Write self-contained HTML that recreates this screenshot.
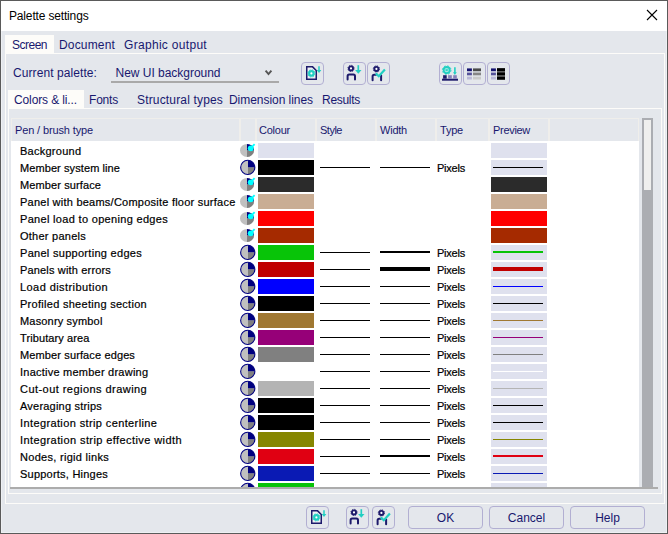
<!DOCTYPE html>
<html><head><meta charset="utf-8"><title>Palette settings</title>
<style>
html,body{margin:0;padding:0}
body{width:668px;height:534px;overflow:hidden;background:#e4e7ec;position:relative;font-family:"Liberation Sans",sans-serif;font-size:12px;color:#000}
div,span,i{position:absolute;box-sizing:border-box}
.win{left:0;top:0;width:668px;height:534px;border:1px solid #5a5a5a;box-shadow:inset 0 0 0 1px #eef0f3}
.title{left:1px;top:1px;width:666px;height:30px;background:#fff}
.t{white-space:nowrap;line-height:16px;height:16px;color:#18186f}
.tab{background:#fdfcf9}
.hl{background:#fff}
.hdr{top:118px;height:23px;background:#e4e7ec;border-top:1px solid #efeeeb;border-left:1px solid #efeeeb;border-right:1px solid #efeeeb}
.list{left:11px;top:142px;width:628px;height:345px;background:#fff;overflow:hidden}
.rt{-webkit-text-stroke:0.2px #000;left:20px;white-space:nowrap;line-height:16px;height:16px;font-family:"Liberation Sans",sans-serif;font-size:11px;color:#000}
.px{-webkit-text-stroke:0.2px #000;left:437px;white-space:nowrap;line-height:16px;height:16px;font-family:"Liberation Sans",sans-serif;font-size:11px;color:#000}
.ic{position:absolute}
.sw{left:258px;width:56px;height:15px}
.ln{width:50px;background:#000}
.pv{left:491px;width:56px;height:15px;background:#dfe1ee}
.pv i{left:2px;width:50px}
.btn{border:1px solid #b2afd2;border-radius:4px;background:#e4e7ec}
.tb{text-align:center;line-height:23px;color:#18186f;font-size:12px}
</style></head><body>
<div class="win"></div>
<div class="title"></div>
<svg style="position:absolute;left:646px;top:9px" width="12" height="12" viewBox="0 0 12 12"><path d="M1 1L11 11M11 1L1 11" stroke="#000" stroke-width="1.1" fill="none"/></svg>

<!-- outer tabs -->
<div class="tab" style="left:5px;top:35px;width:49px;height:19px"></div>
<!-- outer panel border -->
<div style="left:5px;top:53px;width:660px;height:451px;border:1px solid #fdfcf9"></div>

<div style="left:111px;top:81px;width:168px;height:2px;background:#a9a9a9"></div>
<svg style="position:absolute;left:263px;top:69px" width="10" height="8" viewBox="0 0 10 8"><path d="M2.6 1.6L5.5 5.1L8.4 1.6" stroke="#555" stroke-width="1.9" fill="none"/></svg>

<!-- toolbar buttons -->
<svg style="position:absolute;left:301px;top:62px" width="23" height="23" viewBox="0 0 23 23"><rect x=".5" y=".5" width="22" height="22" rx="3.5" fill="none" stroke="#b2afd2"/><path d="M5.75 4.85H11.6L15.25 8.5V17.15H5.75Z" fill="#eef0f4" stroke="#1d1a6b" stroke-width="1.5" stroke-linejoin="miter"/><circle cx="10.4" cy="11.4" r="3.6" fill="none" stroke="#21cfc2" stroke-width="0.9" stroke-dasharray="1.5 1.33"/><circle cx="10.4" cy="11.4" r="2.2" fill="#fff" stroke="#21cfc2" stroke-width="2.2"/><path d="M18 4.3V9" stroke="#21cfc2" stroke-width="1.5" fill="none"/><path d="M15.7 8.1H20.3L18 10.9Z" fill="#21cfc2"/></svg>
<svg style="position:absolute;left:343px;top:62px" width="23" height="23" viewBox="0 0 23 23"><rect x=".5" y=".5" width="22" height="22" rx="3.5" fill="none" stroke="#b2afd2"/><circle cx="8" cy="6.4" r="3.1" fill="none" stroke="#1d1a6b" stroke-width="0.9" stroke-dasharray="1.3 1.13"/><circle cx="8" cy="6.4" r="2.05" fill="#fff" stroke="#1d1a6b" stroke-width="1.9"/><path d="M4.6 17.6V14.2Q4.6 12.6 6.2 12.6H10.4Q12 12.6 12 14.2V17.6" fill="none" stroke="#1d1a6b" stroke-width="2" stroke-linecap="round"/><path d="M15.3 3.2V8.5" stroke="#21cfc2" stroke-width="1.7" fill="none"/><path d="M12.1 7.9H18.5L15.3 11.7Z" fill="#21cfc2"/></svg>
<svg style="position:absolute;left:367px;top:62px" width="23" height="23" viewBox="0 0 23 23"><rect x=".5" y=".5" width="22" height="22" rx="3.5" fill="none" stroke="#b2afd2"/><circle cx="9.4" cy="6.9" r="3.1" fill="none" stroke="#1d1a6b" stroke-width="0.9" stroke-dasharray="1.3 1.13"/><circle cx="9.4" cy="6.9" r="2.05" fill="#fff" stroke="#1d1a6b" stroke-width="1.9"/><path d="M5.6 18.2V14.4Q5.6 12.8 7.2 12.8H9" fill="none" stroke="#1d1a6b" stroke-width="2" stroke-linecap="round"/><path d="M14.1 13.4V18.2" fill="none" stroke="#1d1a6b" stroke-width="2" stroke-linecap="round"/><path d="M8.8 11.4L11.8 14.2L17.9 7.5" fill="none" stroke="#21cfc2" stroke-width="2.2"/></svg>
<svg style="position:absolute;left:439px;top:62px" width="23" height="23" viewBox="0 0 23 23"><rect x=".5" y=".5" width="22" height="22" rx="3.5" fill="none" stroke="#b2afd2"/><circle cx="7.7" cy="8.1" r="4.3" fill="none" stroke="#21cfc2" stroke-width="0.9" stroke-dasharray="1.7 1.68"/><circle cx="7.7" cy="8.1" r="3.1" fill="#9fe9e2" stroke="#21cfc2" stroke-width="1.8"/><ellipse cx="7.7" cy="8.1" rx="1.5" ry="0.8" fill="#21cfc2"/><path d="M15.9 5.2V11" stroke="#21cfc2" stroke-width="1.6" fill="none"/><path d="M14 10.2H17.8L15.9 12.9Z" fill="#21cfc2"/><rect x="3" y="16.7" width="16" height="2" fill="#1d1a6b"/><rect x="4.1" y="13.2" width="3.6" height="3.5" fill="#1d1a6b"/><rect x="9.1" y="13.2" width="3.7" height="3.5" fill="#8481b8"/><rect x="14.2" y="13.2" width="3.6" height="3.5" fill="#8481b8"/></svg>
<svg style="position:absolute;left:463px;top:62px" width="23" height="23" viewBox="0 0 23 23"><rect x=".5" y=".5" width="22" height="22" rx="3.5" fill="none" stroke="#b2afd2"/><rect x="4" y="6.4" width="4.9" height="2.9" fill="#15136f"/><rect x="4" y="10.5" width="4.9" height="2.8" fill="#55529a"/><rect x="4" y="14.7" width="4.9" height="2.8" fill="#bab8d8"/><rect x="10" y="6.4" width="8" height="2.9" fill="#4a4a4a"/><rect x="10" y="10.5" width="8" height="2.8" fill="#858585"/><rect x="10" y="14.7" width="8" height="2.8" fill="#cacaca"/><rect x="10" y="9.3" width="8" height="1.2" fill="#c4c6ca"/><rect x="4" y="9.3" width="4.9" height="1.2" fill="#c0c0dc"/></svg>
<svg style="position:absolute;left:487px;top:62px" width="23" height="23" viewBox="0 0 23 23"><rect x=".5" y=".5" width="22" height="22" rx="3.5" fill="none" stroke="#b2afd2"/><rect x="4" y="6.4" width="4.9" height="2.9" fill="#15136f"/><rect x="4" y="10.5" width="4.9" height="2.8" fill="#55529a"/><rect x="4" y="14.7" width="4.9" height="2.8" fill="#bab8d8"/><rect x="10" y="6.2" width="8" height="11.5" fill="#8a8a8a"/><rect x="10" y="6.2" width="8" height="3.1" fill="#000"/><rect x="10" y="10.4" width="8" height="3" fill="#000"/><rect x="10" y="14.6" width="8" height="3.1" fill="#000"/><rect x="4" y="9.3" width="4.9" height="1.2" fill="#c0c0dc"/></svg>

<!-- inner tabs -->
<div class="tab" style="left:8px;top:90px;width:76px;height:19px"></div>
<div style="left:8px;top:108px;width:654px;height:386px;border:1px solid #fdfcf9"></div>

<!-- list -->
<div style="left:10px;top:487px;width:648px;height:2px;background:#acacac"></div>
<div style="left:11px;top:118px;width:628px;height:369px;background:#fff"></div>
<div class="hdr" style="left:11px;width:229px"></div>
<div class="hdr" style="left:240px;width:16px"></div>
<div class="hdr" style="left:256px;width:60px"></div>
<div class="hdr" style="left:316px;width:60px"></div>
<div class="hdr" style="left:376px;width:60px"></div>
<div class="hdr" style="left:436px;width:53px"></div>
<div class="hdr" style="left:489px;width:60px"></div>
<div class="hdr" style="left:549px;width:90px"></div>

<div style="left:0;top:0;width:640px;height:487px;overflow:hidden">
<div class="rt" style="top:143px;letter-spacing:0.258px">Background</div>
<svg class="ic" style="left:239px;top:142px" width="17" height="17" viewBox="0 0 17 17"><ellipse cx="8" cy="8.4" rx="7" ry="6.5" fill="#c0c0c0"/><path d="M8 8.4V1.9A7 6.5 0 0 1 15 8.4Z" fill="#000080"/><path d="M8 8.4H15A7 6.5 0 0 1 8 14.9Z" fill="#808080"/><circle cx="11.7" cy="6.3" r="2.9" fill="#00ffff"/><path d="M12.8 5.2L15.6 2.2" stroke="#00ffff" stroke-width="1.8" fill="none"/></svg>
<div class="sw" style="top:143px;background:#dfe1ee"></div>
<div class="pv" style="top:143px;background:#dfe1ee"></div>
<div class="rt" style="top:160px;letter-spacing:0.088px">Member system line</div>
<svg class="ic" style="left:239px;top:159px" width="17" height="17" viewBox="0 0 17 17"><circle cx="8.75" cy="8.4" r="7" fill="#c0c0c0"/><path d="M9 8.4V1.4A7 7 0 0 1 15.75 8.4Z" fill="#000080"/><path d="M9 8.4H15.75A7 7 0 0 1 9 15.4Z" fill="#808080"/><circle cx="8.75" cy="8.4" r="7.1" fill="none" stroke="#000080" stroke-width="1.1"/></svg>
<div class="sw" style="top:160px;background:#000000"></div>
<div class="ln" style="left:320px;top:167px;height:1px"></div>
<div class="ln" style="left:380px;top:167px;height:1px"></div>
<div class="px" style="top:160px;letter-spacing:-0.224px">Pixels</div>
<div class="pv" style="top:160px"><i style="top:7px;height:1px;background:#000000"></i></div>
<div class="rt" style="top:177px;letter-spacing:0.108px">Member surface</div>
<svg class="ic" style="left:239px;top:176px" width="17" height="17" viewBox="0 0 17 17"><ellipse cx="8" cy="8.4" rx="7" ry="6.5" fill="#c0c0c0"/><path d="M8 8.4V1.9A7 6.5 0 0 1 15 8.4Z" fill="#000080"/><path d="M8 8.4H15A7 6.5 0 0 1 8 14.9Z" fill="#808080"/><circle cx="11.7" cy="6.3" r="2.9" fill="#00ffff"/><path d="M12.8 5.2L15.6 2.2" stroke="#00ffff" stroke-width="1.8" fill="none"/></svg>
<div class="sw" style="top:177px;background:#2b2b2b"></div>
<div class="pv" style="top:177px;background:#2b2b2b"></div>
<div class="rt" style="top:194px;letter-spacing:0.236px">Panel with beams/Composite floor surface</div>
<svg class="ic" style="left:239px;top:193px" width="17" height="17" viewBox="0 0 17 17"><ellipse cx="8" cy="8.4" rx="7" ry="6.5" fill="#c0c0c0"/><path d="M8 8.4V1.9A7 6.5 0 0 1 15 8.4Z" fill="#000080"/><path d="M8 8.4H15A7 6.5 0 0 1 8 14.9Z" fill="#808080"/><circle cx="11.7" cy="6.3" r="2.9" fill="#00ffff"/><path d="M12.8 5.2L15.6 2.2" stroke="#00ffff" stroke-width="1.8" fill="none"/></svg>
<div class="sw" style="top:194px;background:#c9ad94"></div>
<div class="pv" style="top:194px;background:#c9ad94"></div>
<div class="rt" style="top:211px;letter-spacing:0.317px">Panel load to opening edges</div>
<svg class="ic" style="left:239px;top:210px" width="17" height="17" viewBox="0 0 17 17"><ellipse cx="8" cy="8.4" rx="7" ry="6.5" fill="#c0c0c0"/><path d="M8 8.4V1.9A7 6.5 0 0 1 15 8.4Z" fill="#000080"/><path d="M8 8.4H15A7 6.5 0 0 1 8 14.9Z" fill="#808080"/><circle cx="11.7" cy="6.3" r="2.9" fill="#00ffff"/><path d="M12.8 5.2L15.6 2.2" stroke="#00ffff" stroke-width="1.8" fill="none"/></svg>
<div class="sw" style="top:211px;background:#ff0000"></div>
<div class="pv" style="top:211px;background:#ff0000"></div>
<div class="rt" style="top:228px;letter-spacing:0.251px">Other panels</div>
<svg class="ic" style="left:239px;top:227px" width="17" height="17" viewBox="0 0 17 17"><ellipse cx="8" cy="8.4" rx="7" ry="6.5" fill="#c0c0c0"/><path d="M8 8.4V1.9A7 6.5 0 0 1 15 8.4Z" fill="#000080"/><path d="M8 8.4H15A7 6.5 0 0 1 8 14.9Z" fill="#808080"/><circle cx="11.7" cy="6.3" r="2.9" fill="#00ffff"/><path d="M12.8 5.2L15.6 2.2" stroke="#00ffff" stroke-width="1.8" fill="none"/></svg>
<div class="sw" style="top:228px;background:#a52a00"></div>
<div class="pv" style="top:228px;background:#a52a00"></div>
<div class="rt" style="top:245px;letter-spacing:0.291px">Panel supporting edges</div>
<svg class="ic" style="left:239px;top:244px" width="17" height="17" viewBox="0 0 17 17"><circle cx="8.75" cy="8.4" r="7" fill="#c0c0c0"/><path d="M9 8.4V1.4A7 7 0 0 1 15.75 8.4Z" fill="#000080"/><path d="M9 8.4H15.75A7 7 0 0 1 9 15.4Z" fill="#808080"/><circle cx="8.75" cy="8.4" r="7.1" fill="none" stroke="#000080" stroke-width="1.1"/></svg>
<div class="sw" style="top:245px;background:#08c408"></div>
<div class="ln" style="left:320px;top:252px;height:1px"></div>
<div class="ln" style="left:380px;top:251px;height:2px"></div>
<div class="px" style="top:245px;letter-spacing:-0.224px">Pixels</div>
<div class="pv" style="top:245px"><i style="top:6px;height:2px;background:#08c408"></i></div>
<div class="rt" style="top:262px;letter-spacing:0.164px">Panels with errors</div>
<svg class="ic" style="left:239px;top:261px" width="17" height="17" viewBox="0 0 17 17"><circle cx="8.75" cy="8.4" r="7" fill="#c0c0c0"/><path d="M9 8.4V1.4A7 7 0 0 1 15.75 8.4Z" fill="#000080"/><path d="M9 8.4H15.75A7 7 0 0 1 9 15.4Z" fill="#808080"/><circle cx="8.75" cy="8.4" r="7.1" fill="none" stroke="#000080" stroke-width="1.1"/></svg>
<div class="sw" style="top:262px;background:#c00000"></div>
<div class="ln" style="left:320px;top:269px;height:1px"></div>
<div class="ln" style="left:380px;top:267px;height:4px"></div>
<div class="px" style="top:262px;letter-spacing:-0.224px">Pixels</div>
<div class="pv" style="top:262px"><i style="top:5px;height:4px;background:#c00000"></i></div>
<div class="rt" style="top:279px;letter-spacing:0.427px">Load distribution</div>
<svg class="ic" style="left:239px;top:278px" width="17" height="17" viewBox="0 0 17 17"><circle cx="8.75" cy="8.4" r="7" fill="#c0c0c0"/><path d="M9 8.4V1.4A7 7 0 0 1 15.75 8.4Z" fill="#000080"/><path d="M9 8.4H15.75A7 7 0 0 1 9 15.4Z" fill="#808080"/><circle cx="8.75" cy="8.4" r="7.1" fill="none" stroke="#000080" stroke-width="1.1"/></svg>
<div class="sw" style="top:279px;background:#0000ff"></div>
<div class="ln" style="left:320px;top:286px;height:1px"></div>
<div class="ln" style="left:380px;top:286px;height:1px"></div>
<div class="px" style="top:279px;letter-spacing:-0.224px">Pixels</div>
<div class="pv" style="top:279px"><i style="top:7px;height:1px;background:#0000ff"></i></div>
<div class="rt" style="top:296px;letter-spacing:0.286px">Profiled sheeting section</div>
<svg class="ic" style="left:239px;top:295px" width="17" height="17" viewBox="0 0 17 17"><circle cx="8.75" cy="8.4" r="7" fill="#c0c0c0"/><path d="M9 8.4V1.4A7 7 0 0 1 15.75 8.4Z" fill="#000080"/><path d="M9 8.4H15.75A7 7 0 0 1 9 15.4Z" fill="#808080"/><circle cx="8.75" cy="8.4" r="7.1" fill="none" stroke="#000080" stroke-width="1.1"/></svg>
<div class="sw" style="top:296px;background:#000000"></div>
<div class="ln" style="left:320px;top:303px;height:1px"></div>
<div class="ln" style="left:380px;top:303px;height:1px"></div>
<div class="px" style="top:296px;letter-spacing:-0.224px">Pixels</div>
<div class="pv" style="top:296px"><i style="top:7px;height:1px;background:#000000"></i></div>
<div class="rt" style="top:313px;letter-spacing:0.173px">Masonry symbol</div>
<svg class="ic" style="left:239px;top:312px" width="17" height="17" viewBox="0 0 17 17"><circle cx="8.75" cy="8.4" r="7" fill="#c0c0c0"/><path d="M9 8.4V1.4A7 7 0 0 1 15.75 8.4Z" fill="#000080"/><path d="M9 8.4H15.75A7 7 0 0 1 9 15.4Z" fill="#808080"/><circle cx="8.75" cy="8.4" r="7.1" fill="none" stroke="#000080" stroke-width="1.1"/></svg>
<div class="sw" style="top:313px;background:#a07832"></div>
<div class="ln" style="left:320px;top:320px;height:1px"></div>
<div class="ln" style="left:380px;top:320px;height:1px"></div>
<div class="px" style="top:313px;letter-spacing:-0.224px">Pixels</div>
<div class="pv" style="top:313px"><i style="top:7px;height:1px;background:#a07832"></i></div>
<div class="rt" style="top:330px;letter-spacing:0.103px">Tributary area</div>
<svg class="ic" style="left:239px;top:329px" width="17" height="17" viewBox="0 0 17 17"><circle cx="8.75" cy="8.4" r="7" fill="#c0c0c0"/><path d="M9 8.4V1.4A7 7 0 0 1 15.75 8.4Z" fill="#000080"/><path d="M9 8.4H15.75A7 7 0 0 1 9 15.4Z" fill="#808080"/><circle cx="8.75" cy="8.4" r="7.1" fill="none" stroke="#000080" stroke-width="1.1"/></svg>
<div class="sw" style="top:330px;background:#960078"></div>
<div class="ln" style="left:320px;top:337px;height:1px"></div>
<div class="ln" style="left:380px;top:337px;height:1px"></div>
<div class="px" style="top:330px;letter-spacing:-0.224px">Pixels</div>
<div class="pv" style="top:330px"><i style="top:7px;height:1px;background:#960078"></i></div>
<div class="rt" style="top:347px;letter-spacing:0.125px">Member surface edges</div>
<svg class="ic" style="left:239px;top:346px" width="17" height="17" viewBox="0 0 17 17"><circle cx="8.75" cy="8.4" r="7" fill="#c0c0c0"/><path d="M9 8.4V1.4A7 7 0 0 1 15.75 8.4Z" fill="#000080"/><path d="M9 8.4H15.75A7 7 0 0 1 9 15.4Z" fill="#808080"/><circle cx="8.75" cy="8.4" r="7.1" fill="none" stroke="#000080" stroke-width="1.1"/></svg>
<div class="sw" style="top:347px;background:#808080"></div>
<div class="ln" style="left:320px;top:354px;height:1px"></div>
<div class="ln" style="left:380px;top:354px;height:1px"></div>
<div class="px" style="top:347px;letter-spacing:-0.224px">Pixels</div>
<div class="pv" style="top:347px"><i style="top:7px;height:1px;background:#808080"></i></div>
<div class="rt" style="top:364px;letter-spacing:0.235px">Inactive member drawing</div>
<svg class="ic" style="left:239px;top:363px" width="17" height="17" viewBox="0 0 17 17"><circle cx="8.75" cy="8.4" r="7" fill="#c0c0c0"/><path d="M9 8.4V1.4A7 7 0 0 1 15.75 8.4Z" fill="#000080"/><path d="M9 8.4H15.75A7 7 0 0 1 9 15.4Z" fill="#808080"/><circle cx="8.75" cy="8.4" r="7.1" fill="none" stroke="#000080" stroke-width="1.1"/></svg>
<div class="ln" style="left:320px;top:371px;height:1px"></div>
<div class="ln" style="left:380px;top:371px;height:1px"></div>
<div class="px" style="top:364px;letter-spacing:-0.224px">Pixels</div>
<div class="pv" style="top:364px"><i style="top:7px;height:1px;background:#ffffff"></i></div>
<div class="rt" style="top:381px;letter-spacing:0.452px">Cut-out regions drawing</div>
<svg class="ic" style="left:239px;top:380px" width="17" height="17" viewBox="0 0 17 17"><circle cx="8.75" cy="8.4" r="7" fill="#c0c0c0"/><path d="M9 8.4V1.4A7 7 0 0 1 15.75 8.4Z" fill="#000080"/><path d="M9 8.4H15.75A7 7 0 0 1 9 15.4Z" fill="#808080"/><circle cx="8.75" cy="8.4" r="7.1" fill="none" stroke="#000080" stroke-width="1.1"/></svg>
<div class="sw" style="top:381px;background:#b4b4b4"></div>
<div class="ln" style="left:320px;top:388px;height:1px"></div>
<div class="ln" style="left:380px;top:388px;height:1px"></div>
<div class="px" style="top:381px;letter-spacing:-0.224px">Pixels</div>
<div class="pv" style="top:381px"><i style="top:7px;height:1px;background:#b4b4b4"></i></div>
<div class="rt" style="top:398px;letter-spacing:0.208px">Averaging strips</div>
<svg class="ic" style="left:239px;top:397px" width="17" height="17" viewBox="0 0 17 17"><circle cx="8.75" cy="8.4" r="7" fill="#c0c0c0"/><path d="M9 8.4V1.4A7 7 0 0 1 15.75 8.4Z" fill="#000080"/><path d="M9 8.4H15.75A7 7 0 0 1 9 15.4Z" fill="#808080"/><circle cx="8.75" cy="8.4" r="7.1" fill="none" stroke="#000080" stroke-width="1.1"/></svg>
<div class="sw" style="top:398px;background:#000000"></div>
<div class="ln" style="left:320px;top:405px;height:1px"></div>
<div class="ln" style="left:380px;top:405px;height:1px"></div>
<div class="px" style="top:398px;letter-spacing:-0.224px">Pixels</div>
<div class="pv" style="top:398px"><i style="top:7px;height:1px;background:#000000"></i></div>
<div class="rt" style="top:415px;letter-spacing:0.383px">Integration strip centerline</div>
<svg class="ic" style="left:239px;top:414px" width="17" height="17" viewBox="0 0 17 17"><circle cx="8.75" cy="8.4" r="7" fill="#c0c0c0"/><path d="M9 8.4V1.4A7 7 0 0 1 15.75 8.4Z" fill="#000080"/><path d="M9 8.4H15.75A7 7 0 0 1 9 15.4Z" fill="#808080"/><circle cx="8.75" cy="8.4" r="7.1" fill="none" stroke="#000080" stroke-width="1.1"/></svg>
<div class="sw" style="top:415px;background:#000000"></div>
<div class="ln" style="left:320px;top:422px;height:1px"></div>
<div class="ln" style="left:380px;top:422px;height:1px"></div>
<div class="px" style="top:415px;letter-spacing:-0.224px">Pixels</div>
<div class="pv" style="top:415px"><i style="top:7px;height:1px;background:#000000"></i></div>
<div class="rt" style="top:432px;letter-spacing:0.412px">Integration strip effective width</div>
<svg class="ic" style="left:239px;top:431px" width="17" height="17" viewBox="0 0 17 17"><circle cx="8.75" cy="8.4" r="7" fill="#c0c0c0"/><path d="M9 8.4V1.4A7 7 0 0 1 15.75 8.4Z" fill="#000080"/><path d="M9 8.4H15.75A7 7 0 0 1 9 15.4Z" fill="#808080"/><circle cx="8.75" cy="8.4" r="7.1" fill="none" stroke="#000080" stroke-width="1.1"/></svg>
<div class="sw" style="top:432px;background:#868600"></div>
<div class="ln" style="left:320px;top:439px;height:1px"></div>
<div class="ln" style="left:380px;top:439px;height:1px"></div>
<div class="px" style="top:432px;letter-spacing:-0.224px">Pixels</div>
<div class="pv" style="top:432px"><i style="top:7px;height:1px;background:#868600"></i></div>
<div class="rt" style="top:449px;letter-spacing:0.291px">Nodes, rigid links</div>
<svg class="ic" style="left:239px;top:448px" width="17" height="17" viewBox="0 0 17 17"><circle cx="8.75" cy="8.4" r="7" fill="#c0c0c0"/><path d="M9 8.4V1.4A7 7 0 0 1 15.75 8.4Z" fill="#000080"/><path d="M9 8.4H15.75A7 7 0 0 1 9 15.4Z" fill="#808080"/><circle cx="8.75" cy="8.4" r="7.1" fill="none" stroke="#000080" stroke-width="1.1"/></svg>
<div class="sw" style="top:449px;background:#e00012"></div>
<div class="ln" style="left:320px;top:456px;height:1px"></div>
<div class="ln" style="left:380px;top:455px;height:2px"></div>
<div class="px" style="top:449px;letter-spacing:-0.224px">Pixels</div>
<div class="pv" style="top:449px"><i style="top:6px;height:2px;background:#e00012"></i></div>
<div class="rt" style="top:466px;letter-spacing:0.226px">Supports, Hinges</div>
<svg class="ic" style="left:239px;top:465px" width="17" height="17" viewBox="0 0 17 17"><circle cx="8.75" cy="8.4" r="7" fill="#c0c0c0"/><path d="M9 8.4V1.4A7 7 0 0 1 15.75 8.4Z" fill="#000080"/><path d="M9 8.4H15.75A7 7 0 0 1 9 15.4Z" fill="#808080"/><circle cx="8.75" cy="8.4" r="7.1" fill="none" stroke="#000080" stroke-width="1.1"/></svg>
<div class="sw" style="top:466px;background:#0a1ab4"></div>
<div class="ln" style="left:320px;top:473px;height:1px"></div>
<div class="ln" style="left:380px;top:473px;height:1px"></div>
<div class="px" style="top:466px;letter-spacing:-0.224px">Pixels</div>
<div class="pv" style="top:466px"><i style="top:7px;height:1px;background:#0a1ab4"></i></div>
<svg class="ic" style="left:239px;top:482px" width="17" height="17" viewBox="0 0 17 17"><circle cx="8.75" cy="8.4" r="7" fill="#c0c0c0"/><path d="M9 8.4V1.4A7 7 0 0 1 15.75 8.4Z" fill="#000080"/><path d="M9 8.4H15.75A7 7 0 0 1 9 15.4Z" fill="#808080"/><circle cx="8.75" cy="8.4" r="7.1" fill="none" stroke="#000080" stroke-width="1.1"/></svg>
<div class="sw" style="top:483px;background:#08c408"></div>
<div class="pv" style="top:483px"></div>
</div>

<div class="t" style="left:9px;top:8px;font-size:12px;letter-spacing:-0.160px;color:#000">Palette settings</div>
<div class="t" style="left:12px;top:37px;font-size:12px;letter-spacing:-0.505px;">Screen</div>
<div class="t" style="left:59px;top:37px;font-size:12px;letter-spacing:0.162px;">Document</div>
<div class="t" style="left:124px;top:37px;font-size:12px;letter-spacing:0.306px;">Graphic output</div>
<div class="t" style="left:13px;top:65px;font-size:12px;letter-spacing:0.080px;">Current palette:</div>
<div class="t" style="left:115.5px;top:65px;font-size:12px;letter-spacing:-0.023px;">New UI background</div>
<div class="t" style="left:14px;top:92px;font-size:12px;letter-spacing:-0.121px;">Colors &amp; li...</div>
<div class="t" style="left:89px;top:92px;font-size:12px;letter-spacing:-0.203px;">Fonts</div>
<div class="t" style="left:137px;top:92px;font-size:12px;letter-spacing:0.164px;">Structural types</div>
<div class="t" style="left:229px;top:92px;font-size:12px;letter-spacing:-0.047px;">Dimension lines</div>
<div class="t" style="left:322px;top:92px;font-size:12px;letter-spacing:-0.288px;">Results</div>
<div class="t" style="left:15px;top:122px;font-size:11px;letter-spacing:-0.132px;">Pen / brush type</div>
<div class="t" style="left:259px;top:122px;font-size:11px;letter-spacing:-0.234px;">Colour</div>
<div class="t" style="left:320px;top:122px;font-size:11px;letter-spacing:-0.494px;">Style</div>
<div class="t" style="left:380px;top:122px;font-size:11px;letter-spacing:-0.225px;">Width</div>
<div class="t" style="left:440px;top:122px;font-size:11px;letter-spacing:-0.215px;">Type</div>
<div class="t" style="left:493px;top:122px;font-size:11px;letter-spacing:-0.304px;">Preview</div>
<!-- scrollbar -->
<div style="left:642px;top:118px;width:11px;height:369px;background:#abadb2"></div>
<div style="left:644px;top:120px;width:7px;height:70px;background:#efefee"></div>

<!-- bottom buttons -->
<svg style="position:absolute;left:306px;top:506px" width="23" height="23" viewBox="0 0 23 23"><rect x=".5" y=".5" width="22" height="22" rx="3.5" fill="none" stroke="#b2afd2"/><path d="M5.75 4.85H11.6L15.25 8.5V17.15H5.75Z" fill="#eef0f4" stroke="#1d1a6b" stroke-width="1.5" stroke-linejoin="miter"/><circle cx="10.4" cy="11.4" r="3.6" fill="none" stroke="#21cfc2" stroke-width="0.9" stroke-dasharray="1.5 1.33"/><circle cx="10.4" cy="11.4" r="2.2" fill="#fff" stroke="#21cfc2" stroke-width="2.2"/><path d="M18 4.3V9" stroke="#21cfc2" stroke-width="1.5" fill="none"/><path d="M15.7 8.1H20.3L18 10.9Z" fill="#21cfc2"/></svg>
<svg style="position:absolute;left:346px;top:506px" width="23" height="23" viewBox="0 0 23 23"><rect x=".5" y=".5" width="22" height="22" rx="3.5" fill="none" stroke="#b2afd2"/><circle cx="8" cy="6.4" r="3.1" fill="none" stroke="#1d1a6b" stroke-width="0.9" stroke-dasharray="1.3 1.13"/><circle cx="8" cy="6.4" r="2.05" fill="#fff" stroke="#1d1a6b" stroke-width="1.9"/><path d="M4.6 17.6V14.2Q4.6 12.6 6.2 12.6H10.4Q12 12.6 12 14.2V17.6" fill="none" stroke="#1d1a6b" stroke-width="2" stroke-linecap="round"/><path d="M15.3 3.2V8.5" stroke="#21cfc2" stroke-width="1.7" fill="none"/><path d="M12.1 7.9H18.5L15.3 11.7Z" fill="#21cfc2"/></svg>
<svg style="position:absolute;left:372px;top:506px" width="23" height="23" viewBox="0 0 23 23"><rect x=".5" y=".5" width="22" height="22" rx="3.5" fill="none" stroke="#b2afd2"/><circle cx="9.4" cy="6.9" r="3.1" fill="none" stroke="#1d1a6b" stroke-width="0.9" stroke-dasharray="1.3 1.13"/><circle cx="9.4" cy="6.9" r="2.05" fill="#fff" stroke="#1d1a6b" stroke-width="1.9"/><path d="M5.6 18.2V14.4Q5.6 12.8 7.2 12.8H9" fill="none" stroke="#1d1a6b" stroke-width="2" stroke-linecap="round"/><path d="M14.1 13.4V18.2" fill="none" stroke="#1d1a6b" stroke-width="2" stroke-linecap="round"/><path d="M8.8 11.4L11.8 14.2L17.9 7.5" fill="none" stroke="#21cfc2" stroke-width="2.2"/></svg>
<div class="btn tb" style="left:408px;top:506px;width:75px;height:23px">OK</div>
<div class="btn tb" style="left:489px;top:506px;width:75px;height:23px">Cancel</div>
<div class="btn tb" style="left:570px;top:506px;width:75px;height:23px">Help</div>
</body></html>
